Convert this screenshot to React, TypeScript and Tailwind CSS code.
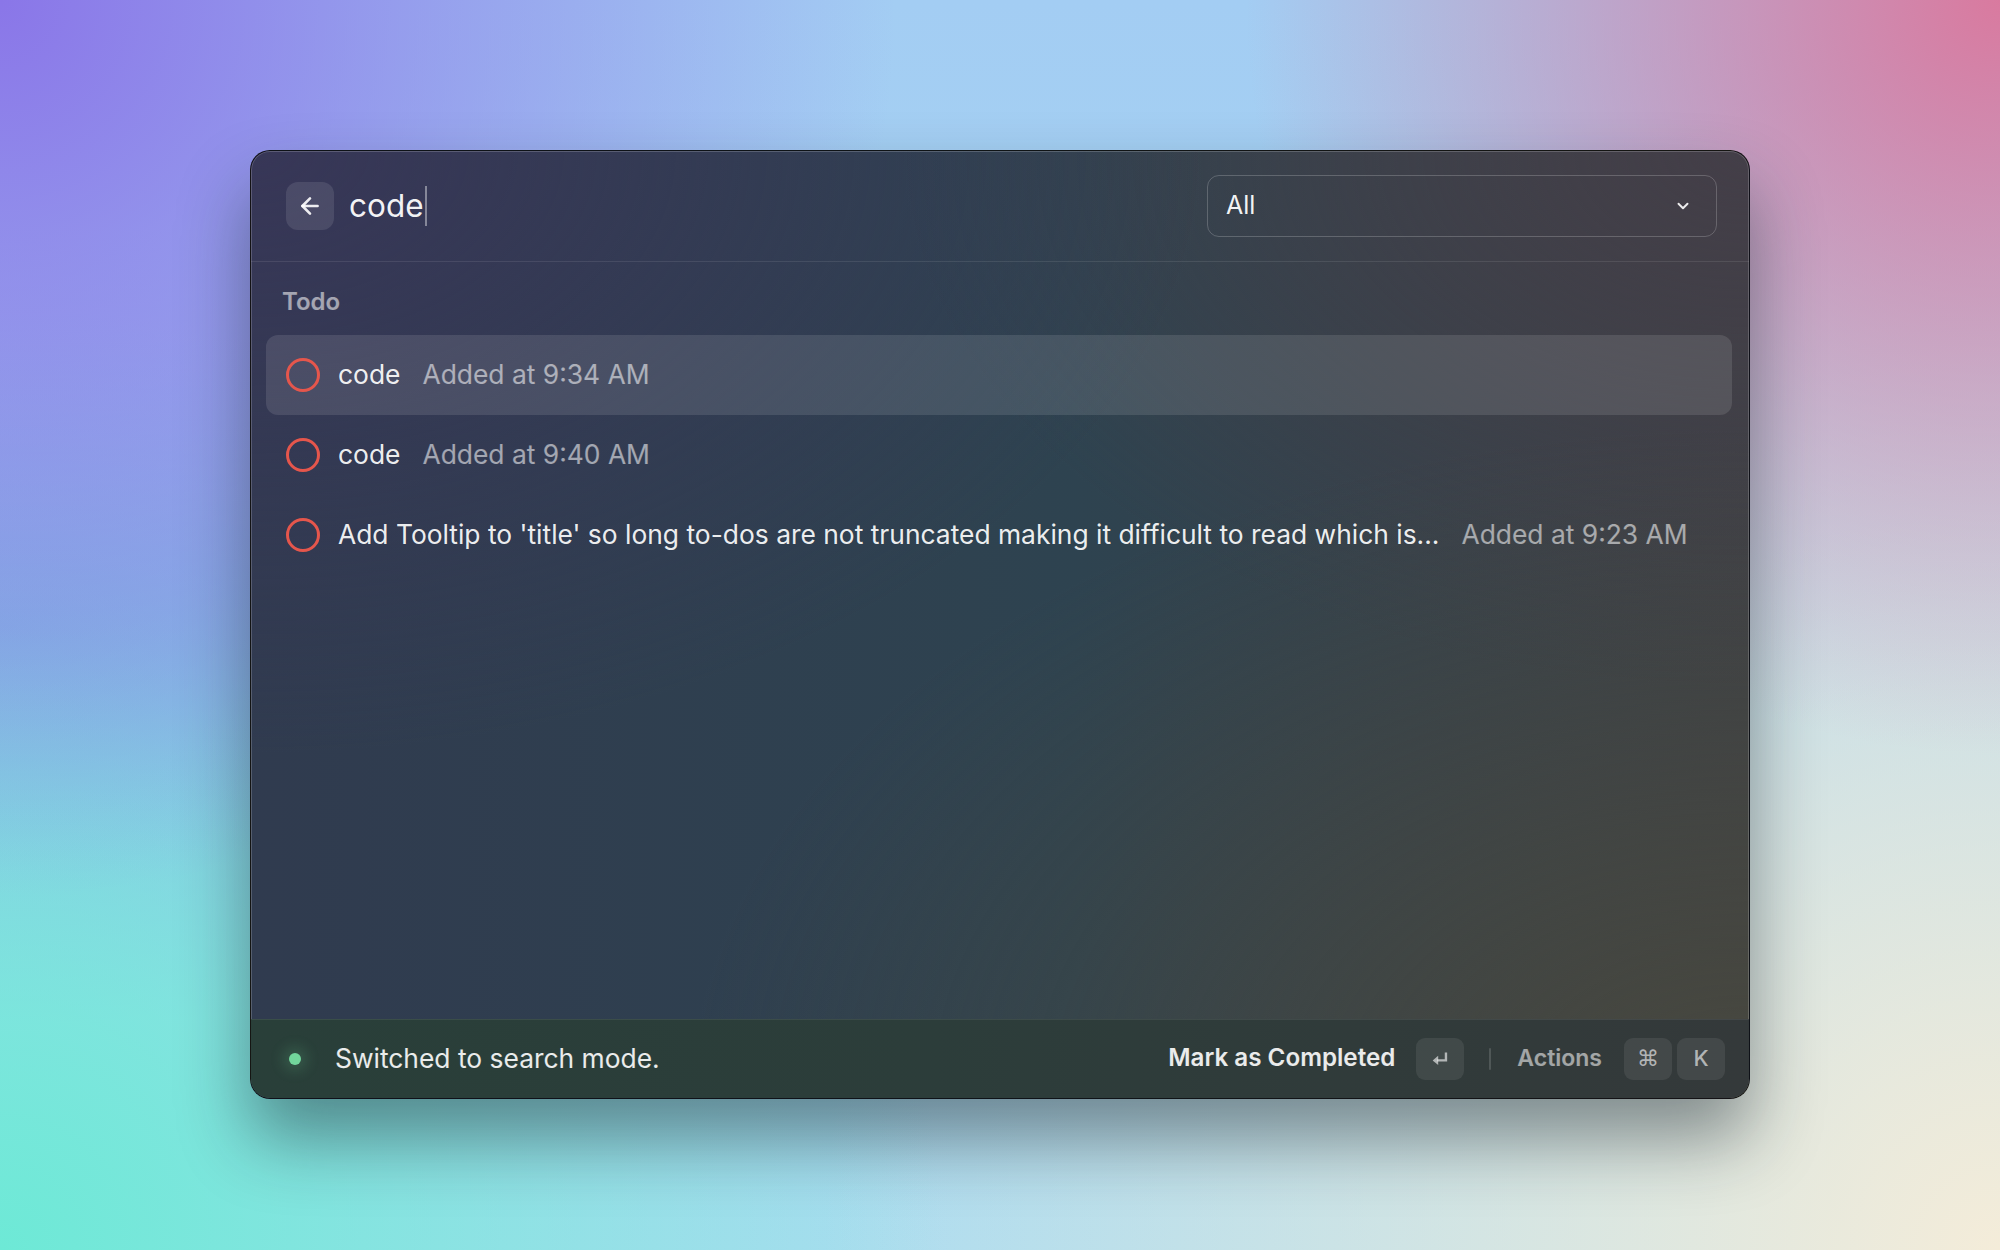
import { ArrowLeft, ChevronDown } from 'lucide-react'

type Todo = { title: string; added: string; selected?: boolean }

const todos: Todo[] = [
  { title: 'code', added: 'Added at 9:34 AM', selected: true },
  { title: 'code', added: 'Added at 9:40 AM' },
  {
    title: "Add Tooltip to 'title' so long to-dos are not truncated making it difficult to read which is...",
    added: 'Added at 9:23 AM'
  }
]

function Kbd({ children }: { children: React.ReactNode }) {
  return (
    <div className="flex items-center justify-center w-[48px] h-[42px] rounded-[9px] bg-white/[0.08] text-[22px] text-white/60 font-medium">
      {children}
    </div>
  )
}

function EnterIcon() {
  return (
    <svg width="22" height="22" viewBox="0 0 24 24" fill="none">
      <path d="M18.5 5v8.5H9" stroke="currentColor" strokeWidth="2.6" />
      <path d="M4 13.5L10 8.5V18.5Z" fill="currentColor" />
    </svg>
  )
}

function TodoRow({ todo }: { todo: Todo }) {
  return (
    <div
      className={`flex items-center h-[80px] px-[20px] rounded-[12px] ${
        todo.selected ? 'bg-white/[0.11]' : ''
      }`}
    >
      <div className="w-[34px] h-[34px] rounded-full border-[3px] border-[#e5564c] shrink-0" />
      <span className="ml-[18px] text-[26.4px] text-white/[0.93] whitespace-nowrap">{todo.title}</span>
      <span className="ml-[22px] text-[26.4px] text-white/[0.55] whitespace-nowrap">{todo.added}</span>
    </div>
  )
}

export default function App() {
  return (
    <div
      className="h-[1250px] w-full flex items-center justify-center [font-family:Inter,'Noto_Sans',sans-serif] [background-image:radial-gradient(circle_at_0%_0%,#8a76e8,transparent_38%),radial-gradient(circle_at_100%_0%,#d97a9f,transparent_32%),radial-gradient(circle_at_0%_100%,#6de9d6,transparent_40%),radial-gradient(circle_at_100%_100%,#f4ecd9,transparent_50%),radial-gradient(ellipse_at_0%_50%,#8d9ee9,transparent_45%),linear-gradient(to_bottom,#a3cdf3,#abdcf0)]"
    >
      <div className="w-[1500px] h-[949px] mb-[2px] flex flex-col rounded-[20px] overflow-hidden border border-black/70 shadow-[0_40px_70px_rgba(20,30,40,0.45),inset_0_0_0_1px_rgba(255,255,255,0.18)] [background-image:radial-gradient(ellipse_at_100%_100%,rgba(72,72,62,0.9),transparent_50%),radial-gradient(ellipse_at_0%_0%,rgba(56,54,88,0.9),transparent_45%),radial-gradient(ellipse_at_100%_0%,rgba(68,62,72,0.9),transparent_40%),linear-gradient(to_right,#303b4f,#2e4350_55%,#3e4146)]">
        <div className="flex items-center h-[111px] shrink-0 pl-[35px] pr-[32px] border-b border-white/[0.09]">
          <div className="flex items-center justify-center w-[48px] h-[48px] rounded-[12px] bg-white/[0.1] text-white/90">
            <ArrowLeft size={26} strokeWidth={2.4} />
          </div>
          <div className="flex items-center ml-[15px] flex-1">
            <span className="text-[31.5px] text-white/95 leading-none">code</span>
            <span className="w-[2px] h-[40px] bg-white/40 ml-[1px]" />
          </div>
          <div className="flex items-center justify-between w-[510px] h-[62px] pl-[18px] pr-[24px] rounded-[12px] border border-white/20">
            <span className="text-[25px] text-white/95">All</span>
            <ChevronDown size={18} strokeWidth={2.6} className="text-white/90" />
          </div>
        </div>

        <div className="flex-1 px-[15px] pr-[17px]">
          <div className="h-[73px] flex items-center pl-[16px] pt-[8px]">
            <span className="text-[24px] font-semibold text-white/55">Todo</span>
          </div>
          {todos.map((todo, i) => (
            <TodoRow key={i} todo={todo} />
          ))}
        </div>

        <div className="flex items-center h-[79px] shrink-0 pl-[38px] pr-[24px] border-t border-white/[0.08] [background-image:linear-gradient(to_right,#293f39,#2c3d3a_45%,#34393a)]">
          <div className="w-[12px] h-[12px] rounded-full bg-[#72d69c] shadow-[0_0_14px_6px_rgba(114,214,156,0.18)]" />
          <span className="ml-[34px] text-[26.4px] text-white/90 flex-1">Switched to search mode.</span>
          <span className="text-[24.2px] font-semibold text-white/90">Mark as Completed</span>
          <div className="ml-[21px] text-white/60">
            <Kbd>
              <EnterIcon />
            </Kbd>
          </div>
          <div className="w-[2px] h-[22px] bg-white/15 ml-[25px] rounded-full" />
          <span className="ml-[26px] text-[23px] font-semibold text-white/55">Actions</span>
          <div className="flex items-center gap-[5px] ml-[22px]">
            <Kbd>
              <span className="[font-family:'DejaVu_Sans',sans-serif] text-[22px]">⌘</span>
            </Kbd>
            <Kbd>K</Kbd>
          </div>
        </div>
      </div>
    </div>
  )
}
